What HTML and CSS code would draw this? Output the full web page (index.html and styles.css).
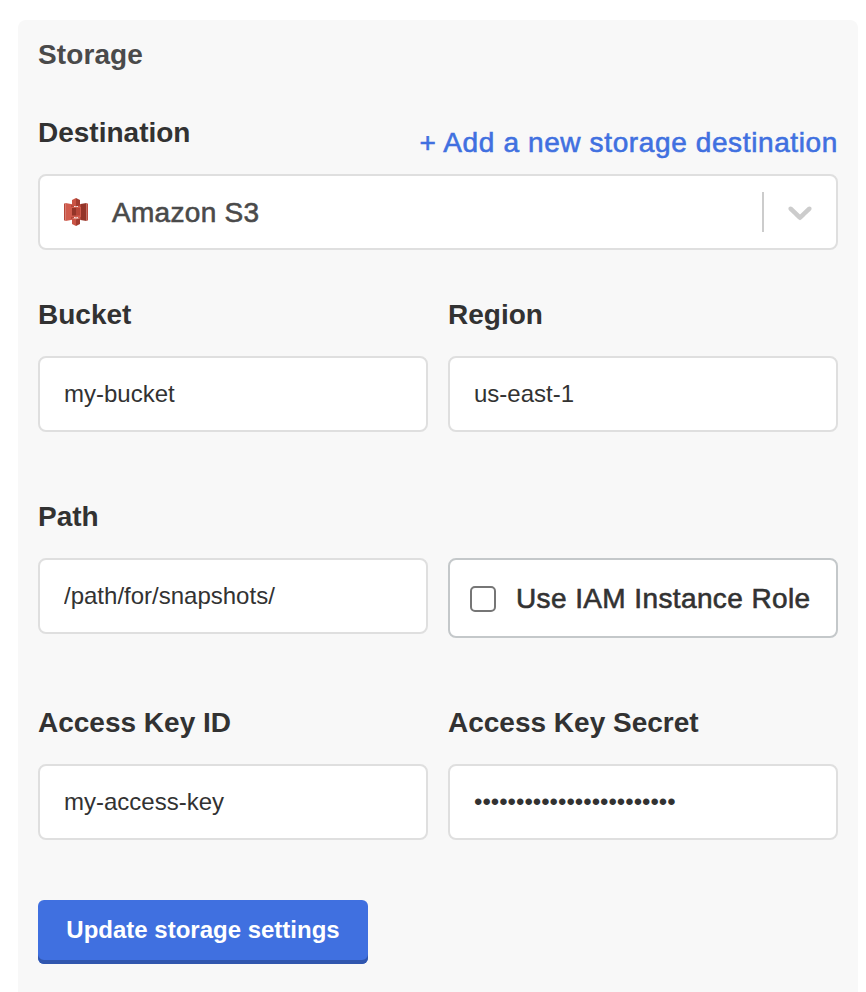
FILE: index.html
```html
<!DOCTYPE html>
<html lang="en">
<head>
<meta charset="utf-8">
<title>Storage</title>
<link rel="stylesheet" href="styles.css">
</head>
<body>
<main class="panel">
  <h2 class="title">Storage</h2>
  <div class="destination-head">
    <span class="label">Destination</span>
    <a class="add-link">+ Add a new storage destination</a>
  </div>
  <div class="select">
    <svg class="s3" width="24" height="28" viewBox="0 0 24 28">
      <path fill="#b84638" d="M0 5.7 1.5 5v18L0 22.3z"/>
      <path fill="#d05b4c" d="M1.5 5 7 6v16l-5.5 1z"/>
      <path fill="#b84638" d="M7 6.2h3v15.6H7z"/>
      <path fill="#d05b4c" d="M14 6.2h3v15.6h-3z"/>
      <path fill="#943428" d="M22.5 5 16.500 6v16l6 1z"/>
      <path fill="#bd4b3d" d="m22.500 5 1.500.7v16.600l-1.500.7z"/>
      <path fill="#cf5b4c" d="M7 9h10v10H7z"/>
      <path fill="#943428" d="M8 10h4.500v7.500H8z"/>
      <path fill="#b84638" d="M12.500 10H16v7.500h-3.500z"/>
      <path fill="#c95445" d="M8 2 12 0v8.500L8 7.500z"/>
      <path fill="#a33c30" d="m12 0 4 2v5.500l-4 1z"/>
      <path fill="#c95445" d="m8 20.500 4-1V28l-4-2z"/>
      <path fill="#a33c30" d="m12 19.500 4 1V26l-4 2z"/>
      <path fill="#e39a8e" d="m8 20.500 4-1 4 1-4 .8z"/>
    </svg>
    <span class="select-value">Amazon S3</span>
    <span class="divider"></span>
    <svg class="chevron" width="40" height="40" viewBox="0 0 20 20"><path fill="#ccc" d="M4.516 7.548c.436-.446 1.043-.481 1.576 0L10 11.295l3.908-3.747c.533-.481 1.141-.446 1.574 0 .436.445.408 1.197 0 1.615-.406.418-4.695 4.502-4.695 4.502a1.095 1.095 0 0 1-1.576 0S4.924 9.581 4.516 9.163s-.436-1.170 0-1.615z"/></svg>
  </div>
  <div class="fields">
    <label class="field"><span class="label">Bucket</span><input class="input" type="text" value="my-bucket"></label>
    <label class="field"><span class="label">Region</span><input class="input" type="text" value="us-east-1"></label>
  </div>
  <div class="fields fields-spaced">
    <label class="field"><span class="label">Path</span><input class="input" type="text" value="/path/for/snapshots/"></label>
    <label class="role"><input class="checkbox" type="checkbox"><span class="role-text">Use IAM Instance Role</span></label>
  </div>
  <div class="fields fields-spaced">
    <label class="field"><span class="label">Access Key ID</span><input class="input" type="text" value="my-access-key"></label>
    <label class="field"><span class="label">Access Key Secret</span><input class="input" type="password" value="abcdefghijklmnopqrstuvwx"></label>
  </div>
  <button class="submit" type="button">Update storage settings</button>
</main>
</body>
</html>
```
FILE: styles.css
```css
* {
  box-sizing: border-box;
}

body {
  margin: 0;
  padding: 20px 8px 0 18px;
  height: 992px;
  overflow: hidden;
  background: #fff;
  color: #323232;
  font-family: "Liberation Sans", Arial, sans-serif;
  font-size: 28px;
  line-height: 30px;
}

.panel {
  height: 1000px;
  padding: 20px;
  border-radius: 8px;
  background: #f8f8f8;
}

.title {
  margin: 0 0 48px;
  color: #4a4a4a;
  font-size: 28px;
  font-weight: 700;
  letter-spacing: 0.1px;
}

.label {
  display: block;
  font-weight: 700;
}

.destination-head {
  display: flex;
  justify-content: space-between;
  height: 56px;
}

.add-link {
  margin-top: 10px;
  color: #4070e0;
  letter-spacing: 0.62px;
  -webkit-text-stroke: 0.6px currentColor;
}

.select {
  display: flex;
  align-items: center;
  height: 76px;
  padding: 0 16px 0 24px;
  border: 2px solid #dfdfdf;
  border-radius: 8px;
  background: #fff;
}

.select-value {
  flex: 1;
  margin-left: 24px;
  padding-top: 2px;
  color: #4a4a4a;
  letter-spacing: 0.3px;
  -webkit-text-stroke: 0.6px currentColor;
}

.divider {
  width: 2px;
  height: 40px;
  margin-right: 16px;
  background: #ccc;
}

.fields {
  display: grid;
  grid-template-columns: 1fr 1fr;
  gap: 20px;
  align-items: start;
  margin-top: 50px;
}

.fields-spaced {
  margin-top: 70px;
}

.input {
  display: block;
  width: 100%;
  height: 76px;
  margin-top: 26px;
  padding: 0 24px;
  border: 2px solid #dfdfdf;
  border-radius: 8px;
  background: #fff;
  color: #323232;
  font: 24px "Liberation Sans", Arial, sans-serif;
}

.role {
  display: flex;
  align-items: center;
  height: 80px;
  margin-top: 56px;
  padding-left: 20px;
  border: 2px solid #c4c8ca;
  border-radius: 8px;
  background: #fff;
}

.checkbox {
  appearance: none;
  width: 26px;
  height: 26px;
  margin: 2px 20px 0 0;
  border: 2px solid #767676;
  border-radius: 5px;
  background: #fff;
}

.role-text {
  padding-top: 2px;
  letter-spacing: 0.39px;
  white-space: nowrap;
  -webkit-text-stroke: 0.6px currentColor;
}

.submit {
  display: block;
  width: 330px;
  height: 64px;
  margin-top: 60px;
  padding: 0 0 4px;
  border: 0;
  border-radius: 6px;
  background: #4070e0;
  box-shadow: inset 0 -4px 0 #3056ae;
  color: #fff;
  font: 700 24px "Liberation Sans", Arial, sans-serif;
}
```
